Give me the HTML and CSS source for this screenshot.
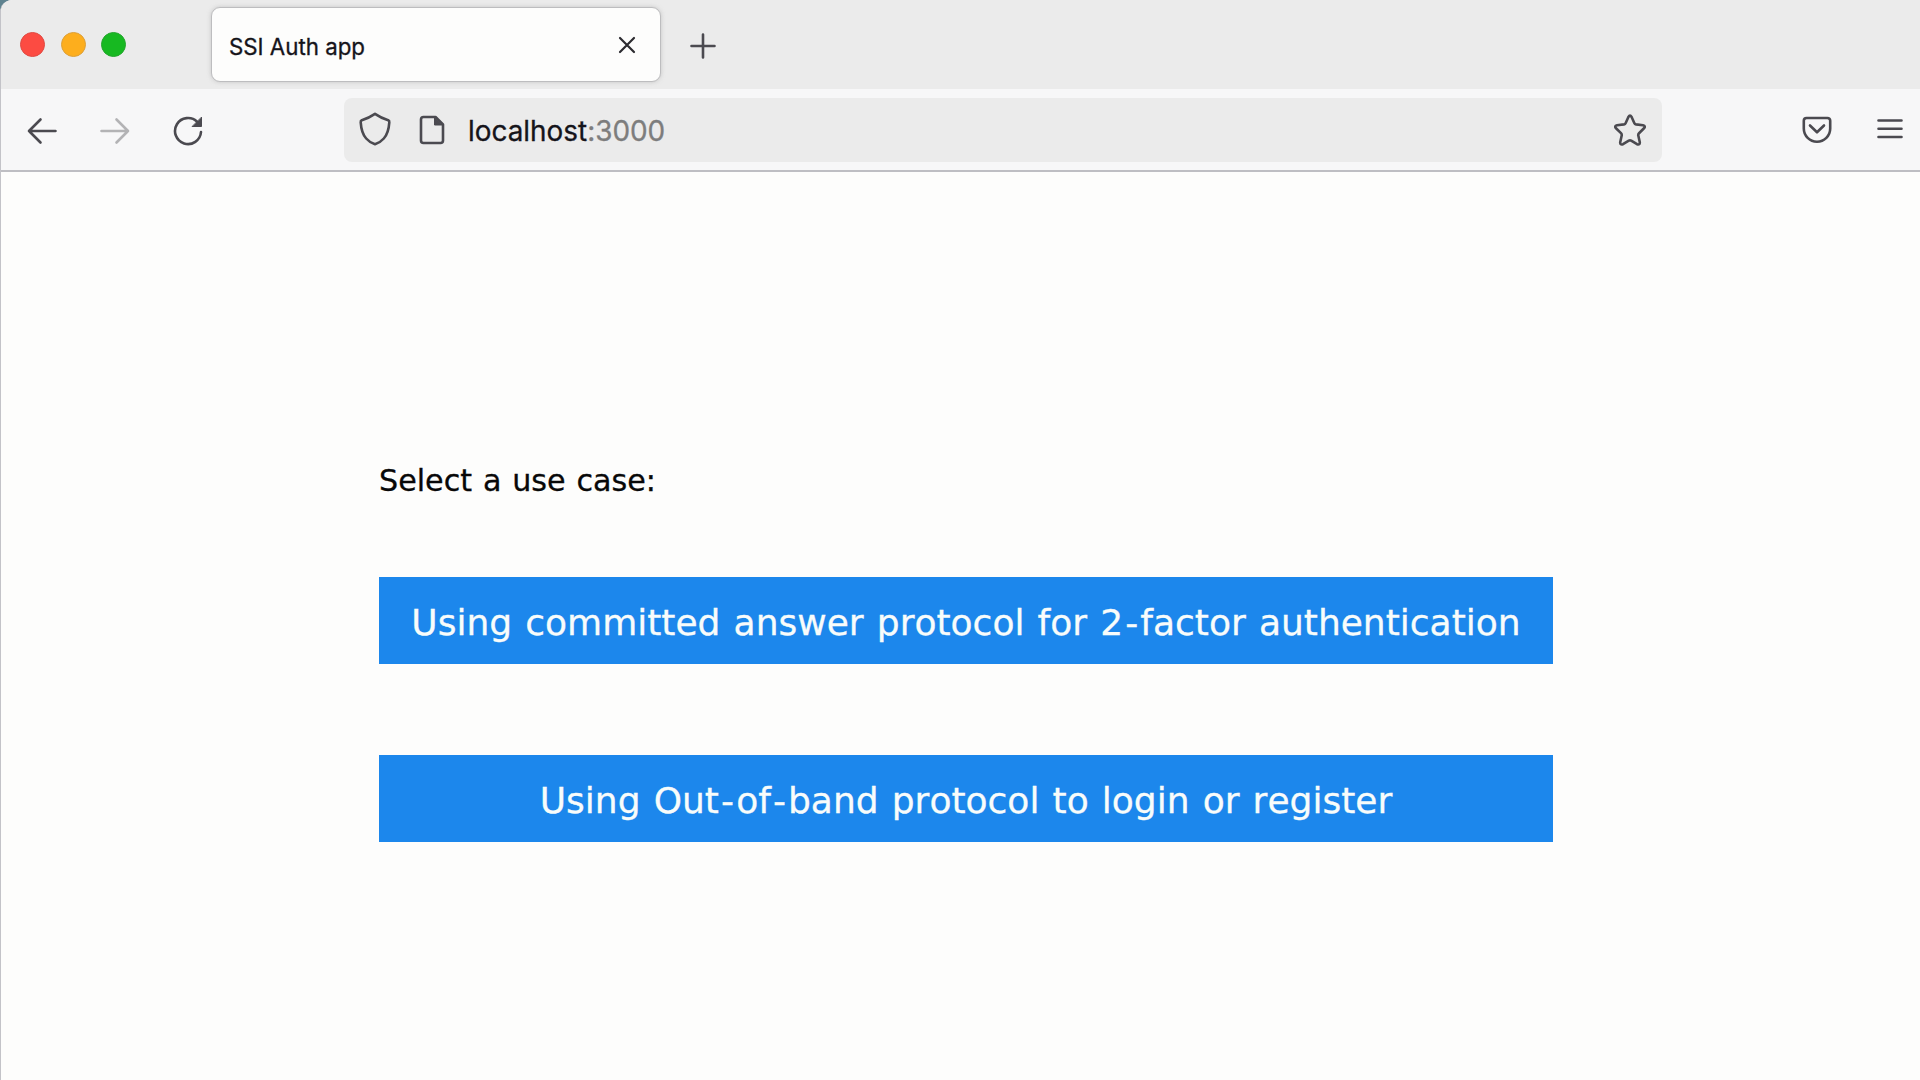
FILE: index.html
```html
<!DOCTYPE html>
<html lang="en">
<head>
<meta charset="utf-8">
<title>SSI Auth app</title>
<link rel="stylesheet" href="styles.css">
</head>
<body>
<div class="window">
  <header class="tabstrip">
    <div class="lights">
      <span class="light red"></span>
      <span class="light amber"></span>
      <span class="light green"></span>
    </div>
    <div class="tab">
      <span class="tab-title">SSI Auth app</span>
      <svg class="close" width="18" height="18" viewBox="0 0 18 18"><path d="M2 2l14 14M16 2L2 16"/></svg>
    </div>
    <svg class="plus" width="26" height="26" viewBox="0 0 26 26"><path d="M13 1.500v23M1.500 13h23"/></svg>
  </header>
  <nav class="toolbar">
    <div class="nav-buttons">
      <svg width="30" height="28" viewBox="0 0 30 28"><path d="M28.500 14H2M13.500 2.500L2 14l11.500 11.500"/></svg>
      <svg class="disabled" width="30" height="28" viewBox="0 0 30 28"><path d="M1.500 14H28M16.500 2.500L28 14 16.500 25.500"/></svg>
      <svg width="30" height="30" viewBox="0 0 30 30"><path d="M28 16a13 13 0 1 1-3.800-10.200"/><path class="solid" d="M28.500 1.500v9h-9z"/></svg>
    </div>
    <div class="urlbar">
      <svg class="shield" width="32" height="34" viewBox="0 0 32 34"><path d="M16 1.800Q22.500 6.200 29.200 8.200Q30.500 8.800 30.300 10.300Q29.600 21 24.800 26.500Q21 30.800 16 32.300Q11 30.800 7.200 26.500Q2.400 21 1.700 10.300Q1.500 8.800 2.800 8.200Q9.500 6.200 16 1.800z"/></svg>
      <svg class="page" width="26" height="30" viewBox="0 0 26 30"><path d="M4.500 2h12L24 9.500V25.500a2.500 2.500 0 0 1-2.500 2.500H4.500A2.500 2.500 0 0 1 2 25.500v-21A2.500 2.500 0 0 1 4.500 2z"/><path class="solid" d="M15.500 2.500v7.500h8z"/></svg>
      <span class="url">localhost<span class="port">:3000</span></span>
      <svg class="star" width="32" height="32" viewBox="0 0 32 32"><path d="M14.400 3Q16 .3 17.600 3L20.300 9Q20.800 10.200 22 10.400L29 11.300Q32 12 30 14.300L25 19.200Q24 20.200 24.300 21.500L25.800 28.200Q26 31.300 23 30.200L17.200 26.700Q16 26 14.800 26.700L9 30.200Q6 31.300 6.200 28.200L7.700 21.500Q8 20.200 7 19.200L2 14.300Q0 12 3 11.300L10 10.400Q11.200 10.200 11.700 9z"/></svg>
    </div>
    <div class="tools">
      <svg width="30" height="28" viewBox="0 0 30 28"><path d="M4.500 2h21A2.700 2.700 0 0 1 28.200 4.700V12.500a13.200 13.200 0 0 1-26.400 0V4.700A2.700 2.700 0 0 1 4.500 2z"/><path d="M8 9.500l7 6.800 7-6.800"/></svg>
      <svg class="menu" width="26" height="22" viewBox="0 0 26 22"><path d="M1.500 2.500h23M1.500 10.800h23M1.500 19h23"/></svg>
    </div>
  </nav>
  <main class="content">
    <p class="prompt">Select a use case:</p>
    <button class="choice">Using committed answer protocol for 2<span class="hyphen">-</span>factor authentication</button>
    <button class="choice">Using Out<span class="hyphen">-</span>of<span class="hyphen">-</span>band protocol to login or register</button>
  </main>
</div>
</body>
</html>
```
FILE: styles.css
```css
* { box-sizing: border-box; }
body { margin: 0; background: #5f8390; }
svg { display: block; flex: none; fill: none; stroke: #4b4a50; stroke-width: 2.6; stroke-linecap: round; stroke-linejoin: round; }
.solid { fill: #4b4a50; stroke-width: 1; }
.window { height: 1080px; display: flex; flex-direction: column; overflow: hidden; background: #fdfdfc; border-left: 1px solid #c3c3c8; border-top-left-radius: 12px; font-family: Inter, "Liberation Sans", sans-serif; }
.tabstrip { height: 89px; flex: none; display: flex; align-items: flex-start; background: #ebebeb; padding-left: 19px; }
.lights { display: flex; gap: 15.500px; margin-top: 32px; width: 191px; }
.light { width: 25px; height: 25px; border-radius: 50%; border: 1px solid; }
.red { background: #fc4b42; border-color: #df4a42; }
.amber { background: #fdae1d; border-color: #dca03a; }
.green { background: #17b921; border-color: #24a52d; }
.tab { width: 450px; height: 75px; margin-top: 7px; padding: 0 24px 0 17px; display: flex; align-items: center; justify-content: space-between; background: #fdfdfc; border: 1px solid #bdbdbf; border-radius: 9px; box-shadow: 0 0 4px #aaa9; }
.tab-title { font-size: 22.300px; line-height: 28px; color: #15141a; white-space: nowrap; margin-top: 4px; -webkit-text-stroke: .3px; }
.close { stroke: #2c2b30; stroke-width: 2.200; }
.plus { margin: 33px 0 0 29px; }
.toolbar { height: 83px; flex: none; display: flex; align-items: center; background: #f7f7f8; border-bottom: 2px solid #bebec3; padding-left: 26px; }
.nav-buttons { display: flex; align-items: center; gap: 43px; width: 317px; padding-top: 2px; }
.disabled { stroke: #b3b3b5; }
.urlbar { width: 1318px; height: 64px; display: flex; align-items: center; background: #ebebeb; border-radius: 8px; padding: 0 16px 0 15px; }
.shield { margin-bottom: 2px; }
.page { margin-left: 28px; }
.url { margin-left: 23px; padding-top: 2px; font-size: 27.900px; color: #15141a; white-space: nowrap; -webkit-text-stroke: .3px; }
.port { color: #7d7d7d; }
.star { margin-left: auto; }
.tools { display: flex; align-items: center; gap: 45px; margin-left: 140px; }
.menu { margin-bottom: 2px; }
.content { width: 1174px; margin-left: 378px; padding-top: 284px; display: flex; flex-direction: column; font-family: "DejaVu Sans", sans-serif; font-kerning: none; word-spacing: 1.2px; }
.prompt { margin: 0 0 73px; height: 48px; line-height: 49px; font-size: 30.200px; color: #080808; white-space: nowrap; -webkit-text-stroke: .3px; }
.choice { height: 87px; margin-bottom: 91px; padding: 4px 0 0; border: 0; background: #1c87ec; color: #f8fcfb; font: 36px "DejaVu Sans", sans-serif; font-kerning: none; word-spacing: 1.700px; white-space: nowrap; -webkit-text-stroke: .3px; }
.hyphen { padding: 0 2.100px; }
```
